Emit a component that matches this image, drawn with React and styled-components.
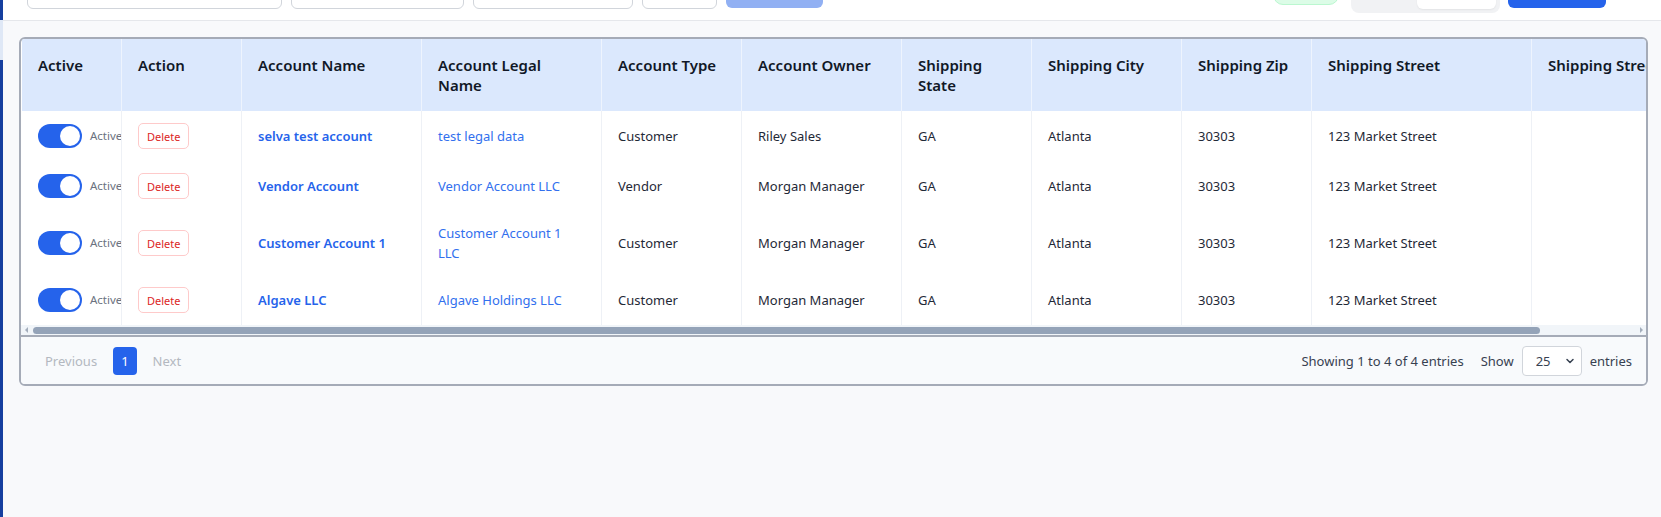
import React from 'react'
import styled, { createGlobalStyle } from 'styled-components'
import { ChevronDown } from 'lucide-react'

const GlobalStyle = createGlobalStyle`
  * { box-sizing: border-box; }
  body {
    margin: 0;
    font-family: "Noto Sans", "Open Sans", sans-serif;
    font-size: 13px;
    color: #1f2937;
    background: #f8f9fb;
  }
  #root { min-height: 100vh; }
`

const Shell = styled.div`
  display: flex;
  min-height: 100vh;
`

const Sidebar = styled.aside`
  width: 3px;
  flex-shrink: 0;
  display: flex;
  flex-direction: column;
  background: #163f9f;
`

const SideItem = styled.div`
  height: ${(p) => p.h}px;
  background: ${(p) => (p.active ? '#dfe8f6' : '#163f9f')};
`

const Main = styled.main`
  flex: 1;
  min-width: 0;
  display: flex;
  flex-direction: column;
`

const TopBar = styled.header`
  height: 21px;
  background: #fff;
  border-bottom: 1px solid #e5e7eb;
  overflow: hidden;
`

const Toolbar = styled.div`
  display: flex;
  align-items: center;
  height: 60px;
  margin-top: -40px;
  padding: 0 55px 0 24px;
`

const Group = styled.div`
  display: flex;
  align-items: center;
  gap: ${(p) => p.gap || 9}px;
  margin-left: ${(p) => (p.right ? 'auto' : '0')};
`

const Field = styled.div`
  width: ${(p) => p.w}px;
  height: 37px;
  background: #fff;
  border: 1px solid #d1d5db;
  border-radius: 6px;
`

const Button = styled.div`
  width: ${(p) => p.w}px;
  height: 36px;
  border-radius: 6px;
  background: ${(p) => (p.faded ? '#91b0f3' : '#2563eb')};
`

const StatusPill = styled.div`
  width: 66px;
  height: 30px;
  border-radius: 10px;
  background: #dcfce7;
  border: 1px solid #bbf7d0;
  margin-right: 4px;
`

const Segmented = styled.div`
  width: 149px;
  height: 45px;
  padding: 4px;
  border-radius: 8px;
  background: #f1f2f4;
  display: flex;
  justify-content: flex-end;
`

const Segment = styled.div`
  width: 79px;
  height: 37px;
  border-radius: 6px;
  background: #fff;
  box-shadow: 0 1px 2px rgba(0, 0, 0, 0.06);
`

const Content = styled.div`
  flex: 1;
  padding: 16px 13px 16px 16px;
`

const Card = styled.section`
  background: #fff;
  border: 2px solid #a5abb7;
  border-radius: 6px;
  overflow: hidden;
`

const TableClip = styled.div`
  overflow: hidden;
`

const Table = styled.table`
  width: ${(p) => p.w}px;
  table-layout: fixed;
  border-collapse: collapse;
`

const Th = styled.th`
  background: #dbe8fd;
  text-align: left;
  vertical-align: top;
  padding: 16px 30px 16px 16px;
  font-weight: 600;
  font-size: 15px;
  line-height: 20px;
  color: #111827;
  white-space: nowrap;
  border-left: 1px solid ${(p) => (p.first ? 'transparent' : '#eef4fe')};
`

const Td = styled.td`
  vertical-align: middle;
  padding: 12px 20px 12px 16px;
  line-height: 20px;
  color: #1f2937;
  overflow: hidden;
  border-left: 1px solid ${(p) => (p.first ? 'transparent' : '#eef1f6')};
`

const ToggleWrap = styled.div`
  display: flex;
  align-items: center;
  gap: 8px;
  white-space: nowrap;
`

const Switch = styled.span`
  position: relative;
  flex-shrink: 0;
  width: 44px;
  height: 24px;
  border-radius: 12px;
  background: #2563eb;

  &::after {
    content: '';
    position: absolute;
    top: 2px;
    right: 2px;
    width: 20px;
    height: 20px;
    border-radius: 50%;
    background: #fff;
  }
`

const SwitchLabel = styled.span`
  font-size: 11.5px;
  color: #6b7280;
`

const DeleteButton = styled.button`
  height: 26px;
  padding: 0 8px;
  font-family: inherit;
  font-size: 11px;
  color: #dc2626;
  background: #fff;
  border: 1px solid #fecaca;
  border-radius: 5px;
`

const Link = styled.a`
  color: ${(p) => (p.strong ? '#2563eb' : '#3270ee')};
  font-weight: ${(p) => (p.strong ? 600 : 400)};
  text-decoration: none;
`

const ScrollTrack = styled.div`
  display: flex;
  align-items: center;
  height: 10px;
  background: #f1f5f9;
`

const ScrollArrow = styled.span`
  width: 10px;
  display: flex;
  justify-content: center;

  &::before {
    content: '';
    border-top: 3px solid transparent;
    border-bottom: 3px solid transparent;
    ${(p) => (p.dir === 'left' ? 'border-right: 3px solid #a3adbb;' : 'border-left: 3px solid #a3adbb;')}
  }
`

const ScrollRail = styled.div`
  flex: 1;
  padding-left: 2px;
`

const ScrollThumb = styled.div`
  height: 7px;
  border-radius: 4px;
  background: #94a3b8;
`

const Footer = styled.footer`
  display: flex;
  align-items: center;
  justify-content: space-between;
  padding: 9px 14px 8px 16px;
  background: #f8fafc;
  border-top: 2px solid #a5abb7;
  line-height: 20px;
`

const Pager = styled.nav`
  display: flex;
  align-items: center;
  gap: 8px;
`

const PageButton = styled.span`
  padding: 4px 8px;
  border-radius: 4px;
  color: ${(p) => (p.active ? '#fff' : '#b3b8c0')};
  background: ${(p) => (p.active ? '#2563eb' : 'transparent')};
`

const Info = styled.div`
  display: flex;
  align-items: center;
  gap: 8px;
  color: #374151;
`

const Showing = styled.span`
  margin-right: 9px;
`

const SelectWrap = styled.div`
  position: relative;
  width: 60px;
  height: 30px;
`

const Select = styled.select`
  appearance: none;
  width: 100%;
  height: 100%;
  padding: 0 0 0 13px;
  font-family: inherit;
  font-size: 13px;
  color: #374151;
  background: #fff;
  border: 1px solid #d1d5db;
  border-radius: 4px;
`

const SelectIcon = styled(ChevronDown)`
  position: absolute;
  right: 6px;
  top: 9px;
  pointer-events: none;
`

const columns = [
  { key: 'active', label: ['Active'], width: 100 },
  { key: 'action', label: ['Action'], width: 120 },
  { key: 'name', label: ['Account Name'], width: 180 },
  { key: 'legal', label: ['Account Legal', 'Name'], width: 180 },
  { key: 'type', label: ['Account Type'], width: 140 },
  { key: 'owner', label: ['Account Owner'], width: 160 },
  { key: 'state', label: ['Shipping', 'State'], width: 130 },
  { key: 'city', label: ['Shipping City'], width: 150 },
  { key: 'zip', label: ['Shipping Zip'], width: 130 },
  { key: 'street', label: ['Shipping Street'], width: 220 },
  { key: 'street2', label: ['Shipping Street 2'], width: 220 },
]

const accounts = [
  { name: 'selva test account', legal: 'test legal data', type: 'Customer', owner: 'Riley Sales' },
  { name: 'Vendor Account', legal: 'Vendor Account LLC', type: 'Vendor', owner: 'Morgan Manager' },
  { name: 'Customer Account 1', legal: 'Customer Account 1 LLC', type: 'Customer', owner: 'Morgan Manager' },
  { name: 'Algave LLC', legal: 'Algave Holdings LLC', type: 'Customer', owner: 'Morgan Manager' },
]

const tableWidth = columns.reduce((sum, c) => sum + c.width, 0)
const visibleWidth = 1626

function AccountRow({ row }) {
  return (
    <tr>
      <Td first>
        <ToggleWrap>
          <Switch />
          <SwitchLabel>Active</SwitchLabel>
        </ToggleWrap>
      </Td>
      <Td>
        <DeleteButton>Delete</DeleteButton>
      </Td>
      <Td><Link strong href="#">{row.name}</Link></Td>
      <Td><Link href="#">{row.legal}</Link></Td>
      <Td>{row.type}</Td>
      <Td>{row.owner}</Td>
      <Td>GA</Td>
      <Td>Atlanta</Td>
      <Td>30303</Td>
      <Td>123 Market Street</Td>
      <Td></Td>
    </tr>
  )
}

export default function App() {
  return (
    <Shell>
      <GlobalStyle />
      <Sidebar>
        <SideItem h={20} />
        <SideItem h={40} active />
      </Sidebar>
      <Main>
        <TopBar>
          <Toolbar>
            <Group>
              <Field w={255} />
              <Field w={173} />
              <Field w={160} />
              <Field w={75} />
              <Button w={97} faded />
            </Group>
            <Group right gap={8}>
              <StatusPill />
              <Segmented>
                <Segment />
              </Segmented>
              <Button w={98} />
            </Group>
          </Toolbar>
        </TopBar>
        <Content>
          <Card>
            <TableClip>
              <Table w={tableWidth}>
                <colgroup>
                  {columns.map((c) => (
                    <col key={c.key} style={{ width: c.width }} />
                  ))}
                </colgroup>
                <thead>
                  <tr>
                    {columns.map((c, i) => (
                      <Th key={c.key} first={i === 0}>
                        {c.label.map((line, j) => (
                          <React.Fragment key={line}>
                            {j > 0 && <br />}
                            {line}
                          </React.Fragment>
                        ))}
                      </Th>
                    ))}
                  </tr>
                </thead>
                <tbody>
                  {accounts.map((row) => (
                    <AccountRow key={row.name} row={row} />
                  ))}
                </tbody>
              </Table>
            </TableClip>
            <ScrollTrack>
              <ScrollArrow dir="left" />
              <ScrollRail>
                <ScrollThumb style={{ width: `${(visibleWidth / tableWidth) * 100}%` }} />
              </ScrollRail>
              <ScrollArrow dir="right" />
            </ScrollTrack>
            <Footer>
              <Pager>
                <PageButton>Previous</PageButton>
                <PageButton active>1</PageButton>
                <PageButton>Next</PageButton>
              </Pager>
              <Info>
                <Showing>Showing 1 to 4 of 4 entries</Showing>
                <span>Show</span>
                <SelectWrap>
                  <Select defaultValue="25">
                    <option value="10">10</option>
                    <option value="25">25</option>
                    <option value="50">50</option>
                    <option value="100">100</option>
                  </Select>
                  <SelectIcon size={12} strokeWidth={3} color="#374151" />
                </SelectWrap>
                <span>entries</span>
              </Info>
            </Footer>
          </Card>
        </Content>
      </Main>
    </Shell>
  )
}
